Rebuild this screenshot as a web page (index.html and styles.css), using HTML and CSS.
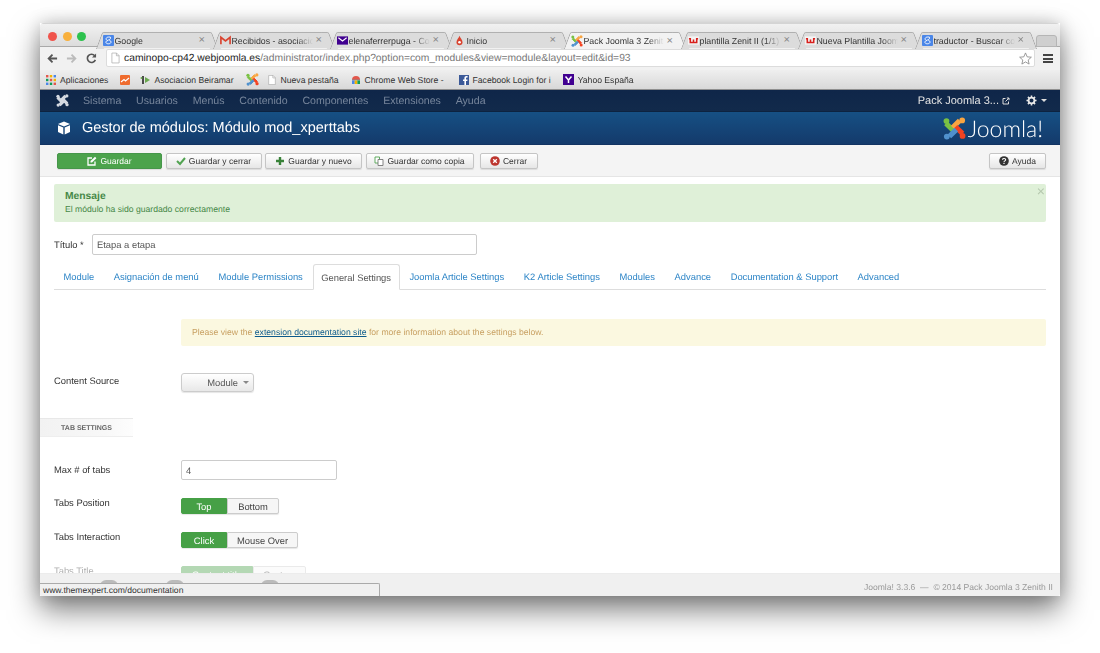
FILE: index.html
```html
<!DOCTYPE html>
<html lang="es">
<head>
<meta charset="utf-8">
<title>Gestor de módulos</title>
<link rel="stylesheet" href="styles.css">
</head>
<body>
<svg class="defs" width="0" height="0" aria-hidden="true">
  <defs>
    <symbol id="jlogo" viewBox="0 0 24 24">
      <path d="M5 6 L11 12 L8.500 14.500 L2.500 8.500 Z" fill="#7ac143" stroke="#7ac143" stroke-width="1.800"/>
      <circle cx="3.600" cy="4.200" r="3" fill="#7ac143"/>
      <path d="M18 5.500 L12 11.500 L9.500 9 L15.500 3 Z" fill="#f9a541" stroke="#f9a541" stroke-width="1.800"/>
      <circle cx="20" cy="3.600" r="3" fill="#f9a541"/>
      <path d="M18.500 18 L12.500 12 L15 9.500 L21 15.500 Z" fill="#f44321" stroke="#f44321" stroke-width="1.800"/>
      <circle cx="20.400" cy="19.800" r="3" fill="#f44321"/>
      <path d="M6 18.500 L12 12.500 L14.500 15 L8.500 21 Z" fill="#5091cd" stroke="#5091cd" stroke-width="1.800"/>
      <circle cx="4" cy="20.400" r="3" fill="#5091cd"/>
    </symbol>
    <symbol id="jwhite" viewBox="0 0 24 24">
      <path d="M5 6 L11 12 L8.500 14.500 L2.500 8.500 Z M18 5.500 L12 11.500 L9.500 9 L15.500 3 Z M18.500 18 L12.500 12 L15 9.500 L21 15.500 Z M6 18.500 L12 12.500 L14.500 15 L8.500 21 Z" fill="#d5dae2" stroke="#d5dae2" stroke-width="2.400"/>
      <circle cx="3.600" cy="4.200" r="3" fill="#d5dae2"/><circle cx="20" cy="3.600" r="3" fill="#d5dae2"/><circle cx="20.400" cy="19.800" r="3" fill="#d5dae2"/><circle cx="4" cy="20.400" r="3" fill="#d5dae2"/>
    </symbol>
    <symbol id="g8" viewBox="0 0 12 12">
      <rect width="12" height="12" rx="1" fill="#4a86e8"/>
      <path d="M6.200 2.200c-1.800 0-2.800 1-2.800 2 0 1.200 1 1.800 2.300 1.800-1.600.2-2.500.9-2.500 1.900 0 1 1 1.700 2.700 1.700 1.800 0 2.900-.9 2.900-2 0-1.600-2.500-1.800-2.500-2.600 1.300 0 2-.8 2-1.900 0-.4-.1-.7-.3-.9z" fill="none" stroke="#fff" stroke-width="1"/>
    </symbol>
    <symbol id="wix" viewBox="0 0 12 12">
      <rect y="1.500" width="12" height="9" fill="#f4f4f4"/>
      <path d="M1 4h1.500v4.200h7V4H11M6 5v3" fill="none" stroke="#d8201c" stroke-width="1.700"/>
    </symbol>
    <symbol id="doc" viewBox="0 0 10 12">
      <path d="M1 .5h5.200L9 3.300v8.200H1z" fill="#fff" stroke="#aaa" stroke-width=".8"/>
      <path d="M6 .5v3h3" fill="none" stroke="#aaa" stroke-width=".8"/>
    </symbol>
  </defs>
</svg>

<div class="window">
  <div class="tabstrip">
    <span class="light red"></span><span class="light yellow"></span><span class="light green"></span>
    <div class="tabs">
      <div class="tab"><svg class="fav"><use href="#g8"/></svg><span class="tab-name">Google</span><span class="x">×</span></div>
      <div class="tab"><svg class="fav" viewBox="0 0 12 12"><path d="M1 10V2.500L6 6.500l5-4V10" fill="none" stroke="#d9432f" stroke-width="1.800"/></svg><span class="tab-name">Recibidos - asociacio</span><span class="x">×</span></div>
      <div class="tab"><svg class="fav" viewBox="0 0 12 12"><rect y="1.500" width="12" height="9" fill="#400090"/><path d="M1.500 3L6 6.500 10.500 3" fill="none" stroke="#fff" stroke-width="1.200"/></svg><span class="tab-name">elenaferrerpuga - Cor</span><span class="x">×</span></div>
      <div class="tab"><svg class="fav fav-narrow" viewBox="0 0 8 12"><path d="M4 .5C4.500 3 7.500 5 7.500 8 7.500 10 6 11.500 4 11.500S.5 10 .5 8C.5 5 3.500 3 4 .5z" fill="#d9432f"/><circle cx="4" cy="8" r="1.500" fill="#fff"/></svg><span class="tab-name">Inicio</span><span class="x">×</span></div>
      <div class="tab active"><svg class="fav fav-wide"><use href="#jlogo"/></svg><span class="tab-name">Pack Joomla 3 Zenith</span><span class="x">×</span></div>
      <div class="tab"><svg class="fav"><use href="#wix"/></svg><span class="tab-name">plantilla Zenit II (1/1)</span><span class="x">×</span></div>
      <div class="tab"><svg class="fav"><use href="#wix"/></svg><span class="tab-name">Nueva Plantilla Joom</span><span class="x">×</span></div>
      <div class="tab"><svg class="fav"><use href="#g8"/></svg><span class="tab-name">traductor - Buscar co</span><span class="x">×</span></div>
      <div class="newtab"></div>
    </div>
  </div>

  <div class="addressbar">
    <svg class="nav-ic" viewBox="0 0 12 12"><path d="M11 6H2M6 1.800 1.800 6 6 10.200" fill="none" stroke="#555" stroke-width="2"/></svg>
    <svg class="nav-ic fwd" viewBox="0 0 12 12"><path d="M1 6h9M6 1.800 10.200 6 6 10.200" fill="none" stroke="#bbb" stroke-width="2"/></svg>
    <svg class="nav-ic rel" viewBox="0 0 12 12"><path d="M10.200 7.500A4.500 4.500 0 1 1 9.500 3" fill="none" stroke="#555" stroke-width="1.800"/><path d="M11 .5v4.500H6.500z" fill="#555"/></svg>
    <div class="url">
      <svg class="url-doc"><use href="#doc"/></svg>
      <span class="url-text"><span class="host">caminopo-cp42.webjoomla.es</span>/administrator/index.php?option=com_modules&amp;view=module&amp;layout=edit&amp;id=93</span>
      <svg class="star" viewBox="0 0 14 14"><path d="M7 1l1.800 4.200 4.500.4-3.400 3 1 4.400L7 10.700 3.100 13l1-4.400-3.400-3 4.500-.4z" fill="#fff" stroke="#888" stroke-width=".9"/></svg>
    </div>
    <div class="burger"><i></i><i></i><i></i></div>
  </div>

  <div class="bookmarks">
    <span class="bm"><svg class="bi" viewBox="0 0 10 10"><g><rect width="2.400" height="2.400" fill="#e2574c"/><rect x="3.800" width="2.400" height="2.400" fill="#f4b400"/><rect x="7.600" width="2.400" height="2.400" fill="#4a86e8"/><rect y="3.800" width="2.400" height="2.400" fill="#0f9d58"/><rect x="3.800" y="3.800" width="2.400" height="2.400" fill="#e2574c"/><rect x="7.600" y="3.800" width="2.400" height="2.400" fill="#f4b400"/><rect y="7.600" width="2.400" height="2.400" fill="#4a86e8"/><rect x="3.800" y="7.600" width="2.400" height="2.400" fill="#0f9d58"/><rect x="7.600" y="7.600" width="2.400" height="2.400" fill="#e2574c"/></g></svg>Aplicaciones</span>
    <span class="bm bm-tight"><svg class="bi" viewBox="0 0 10 10"><rect width="10" height="10" rx="1" fill="#ef6c2e"/><path d="M1 7l3-2.500 1.500 1.500L9 3" fill="none" stroke="#fff" stroke-width="1.200"/></svg></span>
    <span class="bm"><svg class="bi" viewBox="0 0 10 10"><path d="M3 1v8" stroke="#222" stroke-width="1.600"/><path d="M5 2l5 3-5 3z" fill="#6aa84f"/><circle cx="1.500" cy="3" r="1" fill="#6aa84f"/></svg>Asociacion Beiramar</span>
    <span class="bm bm-j"><svg class="bi bi-j"><use href="#jlogo"/></svg></span>
    <span class="bm"><svg class="bi"><use href="#doc"/></svg>Nueva pestaña</span>
    <span class="bm bm-wide"><svg class="bi" viewBox="0 0 10 10"><path d="M1 5a4 4 0 0 1 8 0z" fill="#e2574c"/><path d="M1 4.500h8v1H1z" fill="#888"/><rect x="1" y="5.500" width="2.700" height="3.500" fill="#4a86e8"/><rect x="3.700" y="5.500" width="2.700" height="3.500" fill="#f4b400"/><rect x="6.400" y="5.500" width="2.600" height="3.500" fill="#0f9d58"/></svg>Chrome Web Store -</span>
    <span class="bm"><svg class="bi" viewBox="0 0 10 10"><rect width="10" height="10" fill="#3b5998"/><path d="M7 10V6h1.300l.2-1.600H7v-1c0-.5.200-.8.800-.8h.8V1.100C8.400 1 8 1 7.400 1 6.200 1 5.400 1.700 5.400 3.100v1.300H4V6h1.400v4z" fill="#fff"/></svg>Facebook Login for i</span>
    <span class="bm"><svg class="bi bi-y" viewBox="0 0 11 11"><rect width="11" height="11" fill="#400090"/><path d="M2.500 2.500l3 3.500v3M8.500 2.500l-3 3.500" fill="none" stroke="#fff" stroke-width="1.500"/></svg>Yahoo España</span>
  </div>

  <nav class="adminnav">
    <svg class="nav-logo"><use href="#jwhite"/></svg>
    <a>Sistema</a><a>Usuarios</a><a>Menús</a><a>Contenido</a><a>Componentes</a><a>Extensiones</a><a>Ayuda</a>
    <span class="nav-right">Pack Joomla 3...
      <svg class="ext" viewBox="0 0 8 8"><path d="M6.500 4.500V7H1V1.500h2.500" fill="none" stroke="#ddd" stroke-width="1"/><path d="M3.500 4.500 7 1M4.800 1H7v2.200" fill="none" stroke="#ddd" stroke-width="1"/></svg>
    </span>
    <svg class="gear" viewBox="0 0 12 12"><circle cx="6" cy="6" r="3.200" fill="none" stroke="#e8e8e8" stroke-width="2"/><path d="M6 .5v2M6 9.500v2M.5 6h2M9.500 6h2M2.100 2.100l1.400 1.400M8.500 8.500l1.400 1.400M2.100 9.900l1.400-1.400M8.500 3.500l1.400-1.400" stroke="#e8e8e8" stroke-width="1.700"/></svg>
    <span class="caret caret-light"></span>
  </nav>

  <header class="pagehead">
    <svg class="cube" viewBox="0 0 14 14"><path d="M7 .5 13 3 7 5.500 1 3z" fill="#fff"/><path d="M1 4.200 6.300 6.500V13.500L1 11z" fill="#fff"/><path d="M13 4.200 7.700 6.500V13.500L13 11z" fill="#fff"/></svg>
    <h1>Gestor de módulos: Módulo mod_xperttabs</h1>
    <div class="brand"><svg class="brand-ic"><use href="#jlogo"/></svg><span class="brand-name">Joomla!</span></div>
  </header>

  <div class="subhead">
    <button class="btn btn-save"><svg class="bic" viewBox="0 0 10 10"><path d="M8 5.500V9H1V2h4" fill="none" stroke="#fff" stroke-width="1.300"/><path d="M3.500 6.500V5L8 .8 9.400 2.200 5 6.500z" fill="#fff"/></svg>Guardar</button>
    <button class="btn btn-a"><svg class="bic" viewBox="0 0 10 10"><path d="M1 5l3 3 5-6" fill="none" stroke="#51a351" stroke-width="2"/></svg>Guardar y cerrar</button>
    <button class="btn btn-b"><svg class="bic" viewBox="0 0 10 10"><path d="M5 1v8M1 5h8" stroke="#378137" stroke-width="2.400"/></svg>Guardar y nuevo</button>
    <button class="btn btn-c"><svg class="bic" viewBox="0 0 10 10"><path d="M1 1h4.500v6H1z" fill="#fff" stroke="#51a351" stroke-width=".9"/><path d="M4 3.500h5v6H4z" fill="#fff" stroke="#777" stroke-width=".9"/></svg>Guardar como copia</button>
    <button class="btn btn-d"><svg class="bic" viewBox="0 0 10 10"><circle cx="5" cy="5" r="4.800" fill="#bd362f"/><path d="M3.200 3.200l3.600 3.600M6.800 3.200 3.200 6.800" stroke="#fff" stroke-width="1.300"/></svg>Cerrar</button>
    <button class="btn btn-help"><svg class="bic" viewBox="0 0 10 10"><circle cx="5" cy="5" r="4.800" fill="#333"/><path d="M3.500 3.800C3.500 2 6.700 2 6.700 3.800 6.700 5 5 4.800 5 6" fill="none" stroke="#fff" stroke-width="1.100"/><rect x="4.400" y="6.800" width="1.200" height="1.200" fill="#fff"/></svg>Ayuda</button>
  </div>

  <main class="content">
    <div class="msg">
      <span class="msg-close">×</span>
      <h4>Mensaje</h4>
      <p>El módulo ha sido guardado correctamente</p>
    </div>

    <div class="title-row">
      <label class="title-label">Título *</label>
      <input class="input title-input" value="Etapa a etapa">
    </div>

    <ul class="ntabs">
      <li class="n1">Module</li>
      <li>Asignación de menú</li>
      <li>Module Permissions</li>
      <li class="on">General Settings</li>
      <li>Joomla Article Settings</li>
      <li>K2 Article Settings</li>
      <li>Modules</li>
      <li>Advance</li>
      <li>Documentation &amp; Support</li>
      <li>Advanced</li>
    </ul>

    <div class="warn">Please view the <a>extension documentation site</a> for more information about the settings below.</div>

    <div class="row row-source">
      <label>Content Source</label>
      <div class="select">Module<span class="caret"></span></div>
    </div>

    <div class="section">Tab Settings</div>

    <div class="row row-max">
      <label>Max # of tabs</label>
      <input class="input max-input" value="4">
    </div>
    <div class="row row-pos">
      <label>Tabs Position</label>
      <div class="group"><span class="seg seg-on seg-46">Top</span><span class="seg seg-bottom">Bottom</span></div>
    </div>
    <div class="row row-int">
      <label>Tabs Interaction</label>
      <div class="group"><span class="seg seg-on seg-46">Click</span><span class="seg seg-mouse">Mouse Over</span></div>
    </div>
    <div class="row row-title dim">
      <label>Tabs Title</label>
      <div class="group"><span class="seg seg-on seg-72">Content title</span><span class="seg seg-custom">Custom</span></div>
    </div>
  </main>

  <footer class="foot">
    <div class="foot-links"><span class="fl-a">Ver sitio</span><b></b><span class="fl-b">Visitantes</span><b></b><span class="fl-c">Administradores</span><b></b><span>Desconectar</span></div>
    <div class="foot-copy">Joomla! 3.3.6 &nbsp;—&nbsp; © 2014 Pack Joomla 3 Zenith II</div>
  </footer>
  <div class="status">www.themexpert.com/documentation</div>
</div>
</body>
</html>
```

FILE: styles.css
```css
* { box-sizing: border-box; text-rendering: geometricPrecision; }
html, body { margin: 0; height: 100%; }
body {
  padding: 23px 40px 0;
  background: #fff;
  font-family: "Liberation Sans", Arial, sans-serif;
  overflow: hidden;
}
.defs { position: absolute; }
.window {
  position: relative;
  width: 1020px;
  height: 573px;
  display: flex;
  flex-direction: column;
  overflow: hidden;
  border-radius: 4px 4px 2px 2px;
  background: #fff;
  filter: blur(.3px);
}
body::before {
  content: "";
  position: absolute;
  left: 40px; top: 23px;
  width: 1020px; height: 573px;
  box-shadow: 0 14px 28px rgba(0,0,0,.5), 0 0 16px rgba(0,0,0,.18);
}

/* chrome */
.tabstrip {
  height: 24px;
  flex: none;
  background: linear-gradient(#f1f1f1, #dcdcdc);
  border-top: 1px solid #d4d4d4;
  border-bottom: 1px solid #a9a9a9;
  display: flex;
  align-items: flex-start;
  padding: 8px 0 0 8px;
  position: relative;
}
.light { width: 9px; height: 9px; border-radius: 50%; margin-right: 5.500px; flex: none; }
.red { background: #f0544c; }
.yellow { background: #f8b03c; }
.green { background: #2dc24e; }
.tabs { display: flex; margin-left: 11px; height: 16px; }
.tab {
  position: relative;
  width: 108px;
  height: 16px;
  margin-right: 9px;
  background: #dcdcdc;
  border-top: 1px solid #b0b0b0;
  border-radius: 3px 3px 0 0;
  display: flex;
  align-items: center;
  font-size: 8.800px;
  color: #333;
}
.tab::before, .tab::after {
  content: "";
  position: absolute;
  top: -1px;
  width: 7px;
  height: 16px;
  background: inherit;
  border-top: 1px solid #b0b0b0;
}
.tab::before { left: -4px; transform: skewX(-20deg); border-left: 1px solid #a5a5a5; border-radius: 2px 0 0 0; }
.tab::after { right: -4px; transform: skewX(20deg); border-right: 1px solid #a5a5a5; border-radius: 0 2px 0 0; }
.tab.active { background: #f2f2f2; height: 17px; }
.fav { width: 11px; height: 11px; flex: none; position: relative; z-index: 1; margin-right: 1px; }
.fav-narrow { width: 7px; margin: 0 4px 0 2px; }
.fav-wide { width: 12px; height: 12px; margin: 0 1px 0 0; }
.tab-name {
  flex: 1;
  overflow: hidden;
  white-space: nowrap;
  position: relative;
  z-index: 1;
  -webkit-mask-image: linear-gradient(90deg, #000 80%, transparent);
  mask-image: linear-gradient(90deg, #000 80%, transparent);
}
.x { color: #888; font-size: 11px; margin-left: 3px; width: 12px; line-height: 1; position: relative; z-index: 1; }
.newtab {
  width: 21px; height: 12px; margin: 3px 0 0 -3px;
  background: #cfcfcf; border: 1px solid #b5b5b5; border-radius: 3px 3px 0 0;
}

.addressbar {
  height: 23px;
  flex: none;
  background: #f1f1f1;
  display: flex;
  align-items: center;
  padding-left: 7px;
}
.nav-ic { width: 11px; height: 11px; flex: none; margin-right: 8px; }
.rel { margin-left: 1px; margin-right: 9px; }
.url {
  width: 929px;
  height: 18px;
  margin-top: -1px;
  background: #fff;
  border: 1px solid #dcdcdc;
  border-radius: 2px;
  display: flex;
  align-items: center;
  padding-left: 4px;
  font-size: 10.300px;
  color: #777;
}
.url-doc { width: 9px; height: 12px; margin-right: 4px; flex: none; }
.url-text { flex: 1; }
.host { color: #222; }
.star { width: 13px; height: 13px; margin-right: 2px; }
.burger { width: 10px; margin-left: 8px; display: flex; flex-direction: column; gap: 1.500px; }
.burger i { display: block; height: 2px; background: #444; }

.bookmarks {
  height: 20px;
  flex: none;
  background: linear-gradient(#efefef, #d8d8d8);
  border-bottom: 1px solid #8f8f8f;
  display: flex;
  align-items: center;
  padding-left: 6px;
  font-size: 8.650px;
  color: #333;
  white-space: nowrap;
}
.bm { display: flex; align-items: center; margin-right: 12px; }
.bm-tight { margin-right: 6px; }
.bm-j { margin-right: 8px; }
.bm-wide { margin-right: 15px; }
.bi { width: 10px; height: 10px; margin-right: 4px; flex: none; }
.bi-j { width: 13px; height: 13px; margin-right: 0; }
.bi-y { width: 11px; height: 11px; }

.adminnav {
  height: 22px;
  flex: none;
  background: linear-gradient(#0f2649, #122a4b);
  border-bottom: 1px solid #0d2340;
  display: flex;
  align-items: center;
  padding-left: 16px;
  font-size: 10.600px;
  color: #76859b;
}
.nav-logo { width: 13px; height: 13px; margin-right: 14px; }
.adminnav a { margin-right: 14.800px; }
.nav-right {
  margin-left: auto;
  font-size: 11px;
  color: #e4e4e4;
  display: flex;
  align-items: center;
  gap: 3px;
}
.ext { width: 8px; height: 8px; }
.gear { width: 11px; height: 11px; margin: 0 3px 1px 16px; }
.caret { display: inline-block; width: 0; height: 0; border: 3px solid transparent; border-top: 3px solid #888; border-bottom: 0; }
.caret-light { border-top-color: #ddd; margin-right: 13px; margin-left: 1px; }

.pagehead {
  height: 33px;
  flex: none;
  background: linear-gradient(#165084, #143a6b);
  display: flex;
  align-items: center;
  padding-left: 17px;
  color: #fff;
  border-bottom: 1px solid #123362;
}
.cube { width: 14px; height: 14px; margin-right: 11px; }
.pagehead h1 { margin: 0; font-size: 14.500px; font-weight: 400; flex: 1; }
.brand { display: flex; align-items: center; margin-right: 17px; }
.brand-ic { width: 23px; height: 23px; }
.brand-name { font-family: Lato, "Liberation Sans", sans-serif; font-weight: 300; font-size: 23px; margin-left: 2px; }

.subhead {
  height: 32px;
  flex: none;
  background: #f4f4f4;
  border-bottom: 1px solid #e5e5e5;
  display: flex;
  align-items: center;
  padding: 0 14px 0 17px;
  gap: 3.500px;
}
.btn {
  height: 16px;
  padding: 0;
  font: 8.500px "Liberation Sans", Arial, sans-serif;
  color: #333;
  border: 1px solid #c5c5c5;
  border-radius: 2px;
  background: linear-gradient(#fff, #e6e6e6);
  box-shadow: 0 1px 1px rgba(0,0,0,.1);
  display: flex;
  align-items: center;
  justify-content: center;
  margin-top: 1px;
}
.bic { width: 10px; height: 10px; margin-right: 3px; flex: none; }
.btn-save { width: 105px; color: #fff; background: #4ca34c; border-color: #46964a; }
.btn-a { width: 96px; }
.btn-b { width: 97px; }
.btn-c { width: 108px; margin-right: 2.500px; }
.btn-d { width: 58px; }
.btn-help { width: 57px; margin-left: auto; }

/* content */
.content { flex: 1; min-height: 0; overflow: hidden; background: #fff; color: #333; font-size: 9.400px; position: relative; }
.msg {
  position: relative;
  margin: 7px 14px 0;
  height: 38px;
  padding: 6px 11px;
  background: #dff0d8;
  border-radius: 2px;
  color: #468847;
}
.msg h4 { margin: 0; font-size: 10.300px; line-height: 13px; }
.msg p { margin: 0; font-size: 8.650px; line-height: 12px; }
.msg-close { position: absolute; right: 1px; top: 0; font-size: 14px; line-height: 14px; color: #b5c8ae; }
.title-row { display: flex; align-items: center; margin: 12px 0 0 14px; }
.title-label { width: 38px; margin-top: -1px; }
.input {
  display: block;
  padding: 0 4px;
  height: 21px;
  font: 9.400px "Liberation Sans", Arial, sans-serif;
  color: #555;
  border: 1px solid #ccc;
  border-radius: 2px;
  background: #fff;
}
.title-input { width: 385px; }
.ntabs {
  list-style: none;
  display: flex;
  margin: 9px 14px 0;
  padding: 0;
  height: 26px;
  border-bottom: 1px solid #ddd;
  font-size: 9.400px;
  color: #2d85c7;
}
.ntabs li { padding: 0 9.800px; line-height: 26px; white-space: nowrap; }
.ntabs li.n1 { padding-left: 9.500px; }
.ntabs li.on {
  height: 26px;
  width: 87px;
  padding: 0;
  text-align: center;
  color: #555;
  background: #fff;
  border: 1px solid #ddd;
  border-bottom-color: #fff;
  border-radius: 3px 3px 0 0;
}
.warn {
  margin: 29px 14px 0 141px;
  height: 27px;
  padding-left: 11px;
  line-height: 26px;
  background: #fbf8e0;
  border-radius: 2px;
  color: #c8a062;
  font-size: 8.650px;
}
.warn a { color: #0c5a8c; text-decoration: underline; }
.row { display: flex; align-items: flex-start; padding-left: 14px; }
.row label { width: 127px; flex: none; line-height: 12px; }
.row-source { margin-top: 27px; }
.row-source label { margin-top: 2px; }
.select {
  width: 73px; height: 19px;
  border: 1px solid #ccc; border-radius: 3px;
  background: linear-gradient(#fff, #e8e8e8);
  box-shadow: 0 1px 1px rgba(0,0,0,.1);
  color: #555;
  display: flex; align-items: center; justify-content: flex-end;
  padding-right: 4px;
  gap: 5px;
}
.section {
  margin-top: 26px;
  width: 93px; height: 19px;
  line-height: 19px;
  text-align: center;
  background: linear-gradient(90deg, #f2f2f2, #f8f8f8 70%, #fdfdfd);
  border-top: 1px solid #e8e8e8;
  border-bottom: 1px solid #eee;
  font-size: 7px;
  font-weight: 700;
  text-transform: uppercase;
  color: #666;
}
.row-max { margin-top: 23px; align-items: center; }
.max-input { width: 156px; height: 20px; }
.row-pos { margin-top: 18px; }
.row-int { margin-top: 18px; }
.row-title { margin-top: 18px; }
.row-pos label, .row-int label, .row-title label { margin-top: -1px; }
.group { display: flex; height: 16px; font-size: 9.400px; }
.seg { display: block; line-height: 15px; text-align: center; border: 1px solid #ccc; color: #444; background: #f6f6f6; box-shadow: 0 1px 1px rgba(0,0,0,.1); }
.seg-on { background: #46a046; border-color: #46a046; color: #fff; border-radius: 2px 0 0 2px; }
.seg-46 { width: 46px; }
.seg-72 { width: 72px; }
.seg-bottom { width: 52px; border-radius: 0 2px 2px 0; }
.seg-mouse { width: 71px; border-radius: 0 2px 2px 0; }
.seg-custom { width: 53px; border-radius: 0 2px 2px 0; }
.dim { opacity: .4; }

.foot {
  height: 23px;
  flex: none;
  background: #f0f0f0;
  border-top: 1px solid #ececec;
  display: flex;
  justify-content: space-between;
  align-items: flex-start;
  padding: 6px 7px 0 24px;
  font-size: 8.570px;
  color: #999;
}
.foot-links { display: flex; align-items: center; gap: 3px; opacity: .6; font-size: 7px; }
.foot-links b { display: block; width: 18px; height: 12px; border-radius: 6px; background: #999; }
.fl-a { width: 33px; }
.fl-b { width: 40px; margin-left: 2px; }
.fl-c { width: 69px; margin-left: 2px; }
.foot-copy { margin-top: 2px; }
.status {
  position: absolute;
  left: 0; bottom: 0;
  width: 340px; height: 13px;
  background: #f0f0f0;
  border: 1px solid #aaa;
  border-left: 0; border-bottom: 0;
  border-radius: 0 2px 0 0;
  font-size: 8.570px;
  line-height: 12px;
  padding-left: 3px;
  color: #333;
}
```
